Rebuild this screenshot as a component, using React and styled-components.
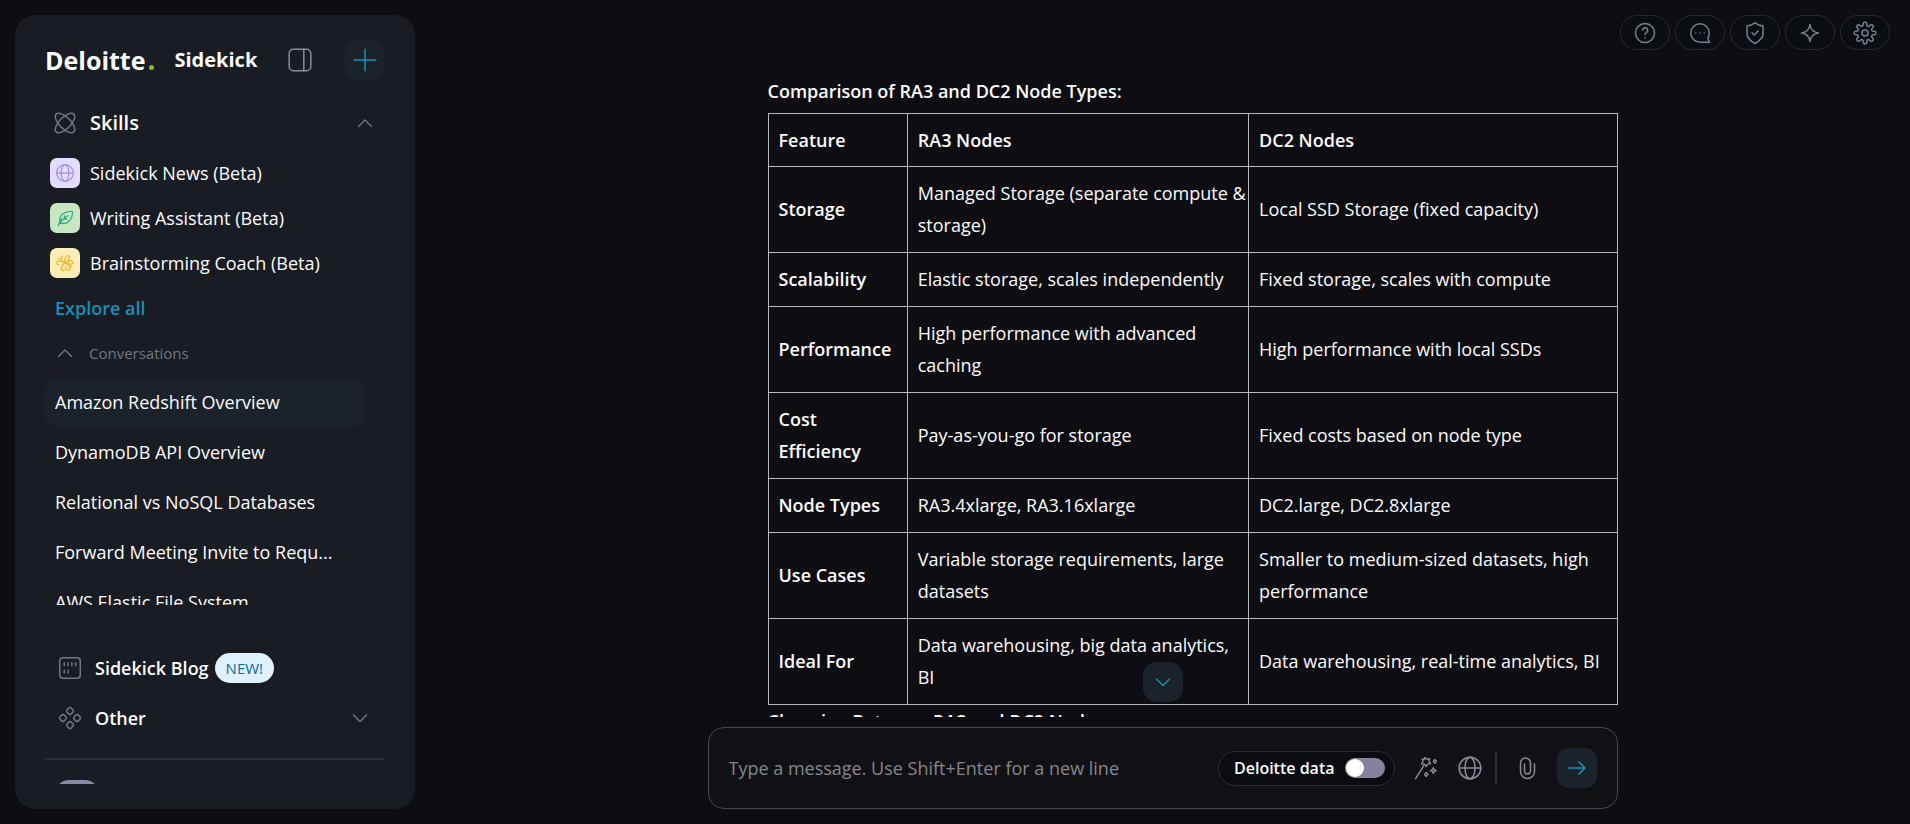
import React from "react";
import styled, { createGlobalStyle, css } from "styled-components";

const color = {
  page: "#0e0d12",
  panel: "#191c22",
  raised: "#1b2229",
  line: "#2a2d33",
  muted: "#737580",
  tool: "#8b8c99",
  accent: "#1690b8",
  text: "#fbfbfc",
};

const GlobalStyle = createGlobalStyle`
  *, *::before, *::after { box-sizing: border-box; }
  body {
    margin: 0;
    background: ${color.page};
    color: ${color.text};
    font-family: "Open Sans", "Noto Sans", sans-serif;
    font-size: 18px;
    line-height: 32px;
  }
  button, input { font: inherit; color: inherit; }
  a { color: inherit; text-decoration: none; }
`;

/* ---------- Icons ---------- */

const Svg = styled.svg`
  display: block;
  flex: none;
  width: ${(p) => p.$size}px;
  height: ${(p) => p.$size}px;
  fill: none;
  stroke: currentColor;
  stroke-width: ${(p) => p.$weight};
  stroke-linecap: round;
  stroke-linejoin: round;
`;

function Icon({ size = 24, weight = 1.5, children }) {
  return (
    <Svg $size={size} $weight={weight} viewBox="0 0 24 24" aria-hidden="true">
      {children}
    </Svg>
  );
}

const gearPath = (() => {
  const points = [];
  for (let i = 0; i < 192; i += 1) {
    const a = (i / 192) * Math.PI * 2;
    const r = 9.1 + 1.8 * Math.tanh(2 * Math.cos(8 * a));
    points.push(`${(12 + r * Math.sin(a)).toFixed(2)} ${(12 - r * Math.cos(a)).toFixed(2)}`);
  }
  return `M${points.join("L")}Z`;
})();

const AtomIcon = () => (
  <Icon size={26} weight={1.4}>
    <path d="M20.2 20.2c2.04-2.03.02-7.36-4.5-11.9-4.54-4.52-9.87-6.54-11.9-4.5-2.04 2.03-.02 7.36 4.5 11.9 4.54 4.52 9.87 6.54 11.9 4.5Z" />
    <path d="M15.7 15.7c4.52-4.54 6.54-9.87 4.5-11.9-2.03-2.04-7.36-.02-11.9 4.5-4.52 4.54-6.54 9.87-4.5 11.9 2.03 2.04 7.36.02 11.9-4.5Z" />
  </Icon>
);
const GlobeIcon = ({ size, weight }) => (
  <Icon size={size} weight={weight}>
    <circle cx="12" cy="12" r="10" />
    <ellipse cx="12" cy="12" rx="4.6" ry="10" />
    <path d="M2 12h20" />
  </Icon>
);
const FeatherIcon = () => (
  <Icon size={20}>
    <path d="M4 21c.8-3 2.2-5.600 4-8" />
    <path d="M6.200 18.200C4.200 12 7.500 4.500 19.500 4c1.500 0 1.700.8 1.500 2-.6 9-6.500 14-14.800 12.200Z" />
    <path d="M6.200 18.200c2.500-4.200 5.300-6.700 9-9M10.500 13.400h4M11.300 12.500V9.500" />
  </Icon>
);
const KnotIcon = () => (
  <Icon size={20} weight={1.4}>
    <path d="M11.500 11.500L7.500 17c-1 3 1.500 5 4 3.500" />
    <path d="M11.500 11.500C7.500 10 6.500 6.500 8.500 3.500" />
    <path d="M10 10.800C6 8.500 2.500 9 2 12c0 1.500 1 2.300 2.500 2" />
    <path d="M11.500 11.500c.3-4 1.500-8 4.300-8.500 2.700.5 1.700 4.500-1.300 7.500" />
    <path d="M13 11.500c4-2.500 8-2.800 8.800-.3.2 2.600-3.800 2.600-7.300 1.300" />
    <path d="M12.500 12.500c4.500 1.500 6.500 5 5 8-2.500 1-4.500-1-5-4" />
    <circle cx="5" cy="7" r=".5" /><circle cx="19" cy="16" r=".5" />
  </Icon>
);
const ChevronIcon = ({ down }) => (
  <Icon size={24} weight={1.4}>
    <path d={down ? "M5.500 9l6.500 6.500L18.500 9" : "M5.500 15.500L12 9l6.500 6.500"} />
  </Icon>
);
const PanelIcon = () => (
  <Icon size={26} weight={1.4}>
    <rect x="2" y="2" width="20" height="20" rx="4" />
    <path d="M15.500 2v20" />
  </Icon>
);
const PlusIcon = () => (
  <Icon size={26} weight={1.4}>
    <path d="M12 2v20M2 12h20" />
  </Icon>
);
const BlogIcon = () => (
  <Icon size={26} weight={1.4}>
    <rect x="2.500" y="2.500" width="19" height="19" rx="3" />
    <path d="M6.700 7.200v2.600M10.200 7.200v2.600M13.700 7.200v2.600M17.200 7.200v2.600M6.700 14v2.600M10.200 14v2.600" />
  </Icon>
);
const ClusterIcon = () => (
  <Icon size={26} weight={1.4}>
    {[[12, 5.5], [5.5, 12], [18.5, 12], [12, 18.5]].map(([x, y]) => (
      <rect key={`${x}-${y}`} x={x - 2.7} y={y - 2.7} width="5.4" height="5.4" rx="1.6" transform={`rotate(45 ${x} ${y})`} />
    ))}
  </Icon>
);
const HelpIcon = () => (
  <Icon>
    <circle cx="12" cy="12" r="9.500" />
    <path d="M9.500 9.300a2.600 2.600 0 1 1 4 2.200c-1 .7-1.500 1.200-1.500 2.200M12 16.800v.1" />
  </Icon>
);
const ChatIcon = () => (
  <Icon>
    <path d="M21.300 21.200H12A9.200 9.200 0 1 1 21.200 12c0 2.500-.6 3.800-1.300 5.200Z" />
    <path d="M7.800 12v.1M12 12v.1M16.200 12v.1" />
  </Icon>
);
const ShieldIcon = () => (
  <Icon>
    <path d="M12 1.800c2.400 1.700 5 2.700 8 3.200v8c0 4-3.600 7-8 9.500C7.600 20 4 17 4 13V5c3-.5 5.600-1.500 8-3.200Z" />
    <path d="M9 11.800l2.200 2.200 4-4" />
  </Icon>
);
const SparkIcon = () => (
  <Icon>
    <path d="M12 3.500c.7 5 2.800 7.700 8.500 8.500-5.700.8-7.800 3.500-8.500 8.500-.7-5-2.800-7.700-8.500-8.500 5.700-.8 7.800-3.500 8.500-8.500Z" />
  </Icon>
);
const GearIcon = () => (
  <Icon>
    <path d={gearPath} />
    <circle cx="12" cy="12" r="3" />
  </Icon>
);
const WandIcon = () => (
  <Icon size={26} weight={1.3}>
    <path d="M2.300 22L9.800 10" />
    <path d="M11 2.200l1.900 1.700 2.500-.6-.7 2.500 1.500 2.100-2.600.5-1.400 2.200-1.600-2.100-2.600-.3 1.300-2.300L8.500 3.600l2 .4Z" />
    <path d="M20.200 4.200l1.500 1.700-1.500 1.700-1.500-1.700ZM18.800 11.700l.8 1.900 1.900.8-1.900.8-.8 1.900-.8-1.900-1.900-.8 1.900-.8ZM12.200 16.200l1.500 1.800-1.500 1.800-1.500-1.800Z" />
  </Icon>
);
const ClipIcon = () => (
  <Icon>
    <path d="M19.500 8v7.500a7 7 0 0 1-14 0V7a5 5 0 0 1 10 0v8a3 3 0 0 1-6 0V8" />
  </Icon>
);
const ArrowIcon = () => (
  <Icon size={24} weight={1.6}>
    <path d="M4 12h16M14 6l6 6-6 6" />
  </Icon>
);

/* ---------- Shared ---------- */

const Page = styled.div`
  display: flex;
  height: 100vh;
  overflow: hidden;
`;

const IconButton = styled.button`
  display: flex;
  align-items: center;
  justify-content: center;
  flex: none;
  width: ${(p) => p.$width || 40}px;
  height: 40px;
  padding: 0;
  border: 0;
  background: none;
  color: ${color.tool};
  cursor: pointer;
  ${(p) =>
    p.$filled &&
    css`
      border-radius: 12px;
      background: ${color.raised};
      color: ${color.accent};
    `}
`;

/* ---------- Sidebar ---------- */

const Sidebar = styled.aside`
  display: flex;
  flex-direction: column;
  flex: none;
  width: 400px;
  margin: 15px 0 15px 15px;
  padding: 25px 30px;
  border-radius: 20px;
  background: ${color.panel};
`;

const Brand = styled.header`
  display: flex;
  align-items: center;
  height: 40px;
  margin-bottom: 20px;
`;

const Logo = styled.span`
  display: flex;
  align-items: baseline;
  gap: 3px;
  font-size: 25px;
  font-weight: 700;

  &::after {
    content: "";
    width: 5px;
    height: 5px;
    border-radius: 50%;
    background: #86bc25;
  }
`;

const Product = styled.strong`
  margin: 0 16px 0 21px;
  font-size: 20px;
  font-weight: 700;
`;

const NewChat = styled(IconButton)`
  margin-left: auto;
`;

const SectionToggle = styled.button`
  display: flex;
  align-items: center;
  gap: 12px;
  width: 100%;
  height: ${(p) => p.$height}px;
  padding: ${(p) => p.$pad};
  border: 0;
  background: none;
  color: ${color.muted};
  font-size: ${(p) => p.$size || 18}px;
  text-align: left;
  cursor: pointer;
`;

const SectionTitle = styled.span`
  flex: 1;
  color: ${color.text};
  font-weight: 600;
`;

const PlainList = styled.ul`
  margin: 0;
  padding: 0;
  list-style: none;
`;

const SkillList = styled(PlainList)`
  padding: 4px 5px 0;
`;

const SkillLink = styled.a`
  display: flex;
  align-items: center;
  gap: 10px;
  height: 45px;
`;

const SkillTile = styled.span`
  display: flex;
  align-items: center;
  justify-content: center;
  width: 30px;
  height: 30px;
  border-radius: 7px;
  background: ${(p) => p.$bg};
  color: ${(p) => p.$fg};
`;

const ExploreLink = styled.a`
  padding: 7px 10px;
  color: ${color.accent};
  font-weight: 600;
`;

const ConversationList = styled(PlainList)`
  flex: 1;
  min-height: 0;
  padding: 3px 20px 0 0;
  overflow: hidden;
`;

const ConversationLink = styled.a`
  display: block;
  margin: 1px 0;
  padding: 7px 10px 9px;
  border-radius: 12px;
  background: ${(p) => (p.$active ? color.raised : "none")};
  white-space: nowrap;
`;

const ConversationItem = styled.li`
  display: flow-root;
`;

const SidebarFooter = styled.footer`
  flex: none;
  padding-top: 38px;
`;

const BlogLink = styled.a`
  display: flex;
  align-items: center;
  gap: 12px;
  height: 50px;
  padding-left: 12px;
  color: ${color.muted};
`;

const BlogTitle = styled.span`
  color: ${color.text};
  font-weight: 600;
`;

const Badge = styled.span`
  margin-left: -6px;
  padding: 0 11px;
  border-radius: 15px;
  background: #dff0ff;
  color: #0f6d91;
  font-size: 15px;
  line-height: 30px;
`;

const Divider = styled.hr`
  height: 2px;
  margin: 15px 0 20px;
  border: 0;
  background: ${color.line};
`;

const UserStrip = styled.div`
  height: 4px;
  padding-left: 10px;
  overflow: hidden;
`;

const Avatar = styled.div`
  width: 44px;
  height: 44px;
  border-radius: 14px;
  background: #8a87a5;
`;

/* ---------- Main ---------- */

const Main = styled.main`
  position: relative;
  display: flex;
  flex: 1;
  justify-content: center;
  min-width: 0;
  padding: 0 20px;
`;

const TopBar = styled.nav`
  position: absolute;
  top: 15px;
  right: 20px;
  display: flex;
  gap: 5px;
`;

const TopButton = styled.button`
  display: flex;
  align-items: center;
  justify-content: center;
  width: 50px;
  height: 35px;
  padding: 0;
  border: 1px solid #2b282c;
  border-radius: 18px;
  background: #0a0d12;
  color: #7c7f8a;
  cursor: pointer;
`;

const Column = styled.div`
  position: relative;
  display: flex;
  flex-direction: column;
  width: 100%;
  max-width: 910px;
`;

const Messages = styled.section`
  flex: 1;
  min-height: 0;
  padding: 75px 0 0 60px;
  overflow: hidden;
`;

const Heading = styled.h2`
  margin: 0;
  font-size: 18px;
  font-weight: 600;
`;

const Table = styled.table`
  width: 100%;
  margin-top: 6px;
  border-collapse: collapse;
  table-layout: fixed;
`;

const Col = styled.col`
  width: ${(p) => p.$width};
`;

const Cell = styled.td`
  padding: 10px 0 11px 10px;
  border: 1px solid #b9b9bd;
  text-align: left;
  vertical-align: middle;
`;

const HeadCell = styled(Cell)`
  padding-right: 10px;
  padding-bottom: ${(p) => (p.scope === "col" ? 10 : 11)}px;
  font-weight: 600;
`;

const ScrollDown = styled(IconButton)`
  position: absolute;
  bottom: 122px;
  left: 50%;
  margin-left: -20px;
  border-radius: 14px;
`;

const Composer = styled.form`
  display: flex;
  align-items: center;
  flex: none;
  height: 82px;
  margin: 10px 0 15px;
  padding: 0 20px;
  border: 1px solid #47494d;
  border-radius: 16px;
  background: #111115;
`;

const MessageInput = styled.input`
  flex: 1;
  min-width: 0;
  padding: 0;
  border: 0;
  outline: 0;
  background: none;

  &::placeholder {
    color: #85868b;
    opacity: 1;
  }
`;

const DataSwitch = styled.label`
  display: flex;
  align-items: center;
  gap: 10px;
  height: 35px;
  margin-right: 9px;
  padding: 0 9px 0 15px;
  border: 1px solid #2c2c31;
  border-radius: 18px;
  background: #0a0c10;
  font-size: 16px;
  font-weight: 600;
`;

const Switch = styled.input`
  appearance: none;
  width: 40px;
  height: 20px;
  margin: 0;
  padding: 0 1px;
  border-radius: 10px;
  background: #85829b;
  cursor: pointer;

  &::before {
    content: "";
    display: block;
    width: 18px;
    height: 18px;
    margin: 1px 0;
    border-radius: 50%;
    background: #fff;
  }
  &:checked::before {
    margin-left: auto;
  }
`;

const ToolDivider = styled.span`
  width: 2px;
  height: 32px;
  margin: 0 8px 0 3px;
  background: ${color.line};
`;

const SendButton = styled(IconButton)`
  margin-left: 8px;
`;

/* ---------- Data ---------- */

const skills = [
  { name: "Sidekick News (Beta)", bg: "#e4dcff", fg: "#a78bdf", icon: <GlobeIcon size={20} weight={1.5} /> },
  { name: "Writing Assistant (Beta)", bg: "#c8e8c4", fg: "#27ae7c", icon: <FeatherIcon /> },
  { name: "Brainstorming Coach (Beta)", bg: "#ffedb8", fg: "#f2b31c", icon: <KnotIcon /> },
];

const conversations = [
  "Amazon Redshift Overview",
  "DynamoDB API Overview",
  "Relational vs NoSQL Databases",
  "Forward Meeting Invite to Requ...",
  "AWS Elastic File System",
];

const topActions = [
  ["Help", <HelpIcon />],
  ["Feedback", <ChatIcon />],
  ["Privacy", <ShieldIcon />],
  ["What's new", <SparkIcon />],
  ["Settings", <GearIcon />],
];

const rows = [
  ["Storage", "Managed Storage (separate compute & storage)", "Local SSD Storage (fixed capacity)"],
  ["Scalability", "Elastic storage, scales independently", "Fixed storage, scales with compute"],
  ["Performance", "High performance with advanced caching", "High performance with local SSDs"],
  ["Cost Efficiency", "Pay-as-you-go for storage", "Fixed costs based on node type"],
  ["Node Types", "RA3.4xlarge, RA3.16xlarge", "DC2.large, DC2.8xlarge"],
  ["Use Cases", "Variable storage requirements, large datasets", "Smaller to medium-sized datasets, high performance"],
  ["Ideal For", "Data warehousing, big data analytics, BI", "Data warehousing, real-time analytics, BI"],
];

export default function App() {
  return (
    <>
      <GlobalStyle />
      <Page>
        <Sidebar>
          <Brand>
            <Logo>Deloitte</Logo>
            <Product>Sidekick</Product>
            <IconButton type="button" aria-label="Collapse sidebar" $width={54}>
              <PanelIcon />
            </IconButton>
            <NewChat type="button" aria-label="New conversation" $filled>
              <PlusIcon />
            </NewChat>
          </Brand>

          <SectionToggle type="button" aria-expanded="true" $height={46} $pad="0 8px 0 7px" $size={20}>
            <AtomIcon />
            <SectionTitle>Skills</SectionTitle>
            <ChevronIcon />
          </SectionToggle>
          <SkillList>
            {skills.map((s) => (
              <li key={s.name}>
                <SkillLink href="#">
                  <SkillTile $bg={s.bg} $fg={s.fg}>{s.icon}</SkillTile>
                  {s.name}
                </SkillLink>
              </li>
            ))}
          </SkillList>
          <ExploreLink href="#">Explore all</ExploreLink>

          <SectionToggle type="button" aria-expanded="true" $height={44} $pad="0 0 0 8px" $size={15}>
            <ChevronIcon />
            <span>Conversations</span>
          </SectionToggle>
          <ConversationList>
            {conversations.map((title, i) => (
              <ConversationItem key={title}>
                <ConversationLink href="#" $active={i === 0}>{title}</ConversationLink>
              </ConversationItem>
            ))}
          </ConversationList>

          <SidebarFooter>
            <BlogLink href="#">
              <BlogIcon />
              <BlogTitle>Sidekick Blog</BlogTitle>
              <Badge>NEW!</Badge>
            </BlogLink>
            <SectionToggle type="button" aria-expanded="false" $height={50} $pad="0 13px 0 12px">
              <ClusterIcon />
              <SectionTitle>Other</SectionTitle>
              <ChevronIcon down />
            </SectionToggle>
            <Divider />
            <UserStrip>
              <Avatar />
            </UserStrip>
          </SidebarFooter>
        </Sidebar>

        <Main>
          <Column>
            <Messages>
              <Heading>Comparison of RA3 and DC2 Node Types:</Heading>
              <Table>
                <colgroup>
                  <Col $width="16.4%" />
                  <Col $width="40.2%" />
                  <Col $width="43.4%" />
                </colgroup>
                <thead>
                  <tr>
                    {["Feature", "RA3 Nodes", "DC2 Nodes"].map((h) => (
                      <HeadCell as="th" scope="col" key={h}>{h}</HeadCell>
                    ))}
                  </tr>
                </thead>
                <tbody>
                  {rows.map(([feature, ra3, dc2]) => (
                    <tr key={feature}>
                      <HeadCell as="th" scope="row">{feature}</HeadCell>
                      <Cell>{ra3}</Cell>
                      <Cell>{dc2}</Cell>
                    </tr>
                  ))}
                </tbody>
              </Table>
              <Heading>Choosing Between RA3 and DC2 Nodes:</Heading>
            </Messages>

            <ScrollDown type="button" aria-label="Scroll to latest" $filled>
              <ChevronIcon down />
            </ScrollDown>

            <Composer onSubmit={(e) => e.preventDefault()}>
              <MessageInput aria-label="Message" placeholder="Type a message. Use Shift+Enter for a new line" />
              <DataSwitch>
                Deloitte data
                <Switch type="checkbox" role="switch" />
              </DataSwitch>
              <IconButton type="button" aria-label="Prompt tools" $width={44}>
                <WandIcon />
              </IconButton>
              <IconButton type="button" aria-label="Web search" $width={44}>
                <GlobeIcon size={26} weight={1.4} />
              </IconButton>
              <ToolDivider />
              <IconButton type="button" aria-label="Attach file" $width={44}>
                <ClipIcon />
              </IconButton>
              <SendButton type="submit" aria-label="Send" $filled>
                <ArrowIcon />
              </SendButton>
            </Composer>
          </Column>
          <TopBar aria-label="Account">
            {topActions.map(([label, icon]) => (
              <TopButton key={label} type="button" aria-label={label}>{icon}</TopButton>
            ))}
          </TopBar>
        </Main>
      </Page>
    </>
  );
}
